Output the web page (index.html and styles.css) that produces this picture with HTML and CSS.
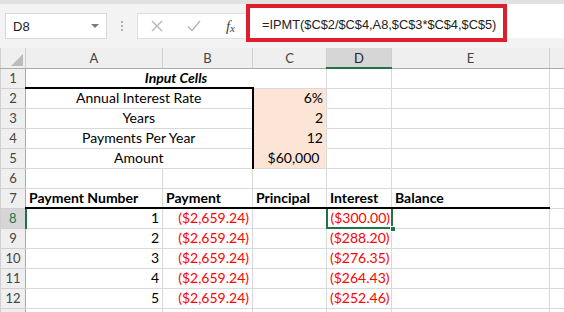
FILE: index.html
```html
<!DOCTYPE html>
<html lang="en">
<head>
  <meta charset="UTF-8">
  <title>IPMT example</title>
  <link rel="stylesheet" href="styles.css">
</head>
<body>

  <div class="ribbon-edge"></div>
  <div class="formula-row">
    <div class="name-box">
      <span>D8</span>
      <svg class="caret" width="8" height="4" viewBox="0 0 8 4"><path d="M0 0h8L4 4z" fill="#7a7a7a"/></svg>
    </div>
    <div class="grip"><i></i><i></i><i></i></div>
    <div class="fx-buttons">
      <svg width="12" height="12" viewBox="0 0 12 12"><path d="M1 1l10 10M11 1L1 11" stroke="#b4b4b4" stroke-width="1.3"/></svg>
      <svg width="14" height="12" viewBox="0 0 14 12"><path d="M1 6.5l4 4L13 1" stroke="#b4b4b4" stroke-width="1.3" fill="none"/></svg>
      <span class="fx">f<sub>x</sub></span>
    </div>
    <div class="formula">
      <span>=IPMT($C$2/$C$4,A8,$C$3*$C$4,$C$5)</span>
      <div class="callout"></div>
    </div>
  </div>

  <table class="sheet">
    <colgroup>
      <col style="width:25px">
      <col style="width:137px">
      <col style="width:90px">
      <col style="width:74px">
      <col style="width:65px">
      <col style="width:158px">
      <col style="width:60px">
    </colgroup>
    <thead>
      <tr>
        <th class="corner"><svg width="12" height="12" viewBox="0 0 12 12"><path d="M12 0V12H0z" fill="#bcbcbc"/></svg></th>
        <th>A</th><th>B</th><th>C</th><th class="active-col">D</th><th>E</th><th></th>
      </tr>
    </thead>
    <tbody>
      <tr>
        <th>1</th>
        <td colspan="3" class="title">Input Cells</td><td></td><td></td><td></td>
      </tr>
      <tr>
        <th>2</th>
        <td colspan="2" class="label first">Annual Interest Rate</td>
        <td class="input num">6%</td><td></td><td></td><td></td>
      </tr>
      <tr>
        <th>3</th>
        <td colspan="2" class="label">Years</td>
        <td class="input num">2</td><td></td><td></td><td></td>
      </tr>
      <tr>
        <th>4</th>
        <td colspan="2" class="label">Payments Per Year</td>
        <td class="input num">12</td><td></td><td></td><td></td>
      </tr>
      <tr>
        <th>5</th>
        <td colspan="2" class="label">Amount</td>
        <td class="input num last">$60,000&nbsp;</td><td></td><td></td><td></td>
      </tr>
      <tr>
        <th>6</th>
        <td></td><td></td><td></td><td></td><td></td><td></td>
      </tr>
      <tr class="head-row">
        <th>7</th>
        <td>Payment Number</td><td>Payment</td><td>Principal</td><td>Interest</td><td>Balance</td><td class="plain"></td>
      </tr>
      <tr>
        <th class="active-row">8</th>
        <td class="num">1</td><td class="num neg">($2,659.24)</td><td></td>
        <td class="num neg selected">($300.00)<span class="handle"></span></td><td></td><td></td>
      </tr>
      <tr>
        <th>9</th>
        <td class="num">2</td><td class="num neg">($2,659.24)</td><td></td><td class="num neg">($288.20)</td><td></td><td></td>
      </tr>
      <tr>
        <th>10</th>
        <td class="num">3</td><td class="num neg">($2,659.24)</td><td></td><td class="num neg">($276.35)</td><td></td><td></td>
      </tr>
      <tr>
        <th>11</th>
        <td class="num">4</td><td class="num neg">($2,659.24)</td><td></td><td class="num neg">($264.43)</td><td></td><td></td>
      </tr>
      <tr>
        <th>12</th>
        <td class="num">5</td><td class="num neg">($2,659.24)</td><td></td><td class="num neg">($252.46)</td><td></td><td></td>
      </tr>
      <tr>
        <th></th>
        <td></td><td></td><td></td><td></td><td></td><td></td>
      </tr>
    </tbody>
  </table>

</body>
</html>
```

FILE: styles.css
```css
* {
  box-sizing: border-box;
}

body {
  margin: 0;
  width: 564px;
  height: 312px;
  overflow: hidden;
  background: #fff;
  font-family: Lato, "Liberation Sans", Arial, sans-serif;
  color: #000;
}

.ribbon-edge {
  height: 4px;
  background: #e1e1e1;
}

.formula-row {
  display: flex;
  align-items: flex-start;
  height: 44px;
  background: #f3f3f3;
}

.name-box {
  display: flex;
  align-items: center;
  justify-content: space-between;
  width: 102px;
  height: 26px;
  margin: 9px 0 0 5px;
  padding: 0 7px 0 7px;
  background: #fff;
  border: 1px solid #d6d6d6;
  font-family: "Liberation Sans", Arial, sans-serif;
  font-size: 13px;
  color: #222;
}

.grip {
  display: flex;
  flex-direction: column;
  gap: 2px;
  margin: 17px 0 0 14px;
}

.grip i {
  display: block;
  width: 2px;
  height: 2px;
  background: #b0b0b0;
}

.fx-buttons {
  display: flex;
  align-items: center;
  justify-content: space-between;
  width: 109px;
  height: 26px;
  margin: 9px 0 0 14px;
  padding: 0 11px 0 13px;
  background: #fff;
  border: 1px solid #dedede;
  border-right: none;
}

.fx {
  font-family: "Liberation Serif", "Times New Roman", serif;
  font-style: italic;
  font-size: 15px;
  color: #444;
}

.fx sub {
  font-size: 11px;
  vertical-align: -1px;
}

.formula {
  position: relative;
  flex: 1;
  height: 34px;
  padding: 13px 0 0 16px;
  background: #fff;
  font-family: "Liberation Sans", Arial, sans-serif;
  font-size: 12.8px;
  color: #222;
  white-space: nowrap;
}

.callout {
  position: absolute;
  left: 0;
  top: 0;
  width: 261px;
  height: 38px;
  border: 4px solid #dc1f2b;
}

.sheet {
  border-collapse: collapse;
  table-layout: fixed;
  width: 609px;
  font-size: 14px;
}

.sheet th,
.sheet td {
  height: 20px;
  padding: 0 3px;
  border: 1px solid #d9d9d9;
  white-space: nowrap;
  overflow: hidden;
  line-height: 18px;
}

.sheet th {
  background: #efefef;
  font-weight: normal;
  color: #444;
  font-size: 13px;
  text-align: center;
  border-color: #d0d0d0;
}

.sheet thead th {
  border-top: none;
  border-bottom-color: #ababab;
  padding: 0;
}

.sheet tbody th {
  padding: 0;
  border-right-color: #ababab;
}

.sheet .corner {
  text-align: right;
  vertical-align: bottom;
  padding: 0 2px 2px 0;
  line-height: 0;
}

.sheet .active-col {
  background: #d6d6d6;
  color: #222;
  border-bottom: 2px solid #217346;
}

.sheet .active-row {
  background: #d6d6d6;
  color: #217346;
  border-right: 2px solid #217346;
}

.title {
  text-align: center;
  font-weight: bold;
  font-style: italic;
}

.label {
  text-align: center;
  border-right: 2px solid #000 !important;
}

.label.first {
  border-top: 2px solid #000;
}

.input {
  background: #fce4d6;
  border-top-color: #fce4d6 !important;
  border-bottom-color: #fce4d6 !important;
}

.input.last {
  border-bottom-color: #d9d9d9 !important;
}

.num {
  text-align: right;
}

.neg {
  color: #f00;
}

.head-row td {
  font-weight: bold;
  border-bottom: 2px solid #000;
}

.head-row td.plain {
  border-bottom: 1px solid #d9d9d9;
}

.selected {
  position: relative;
  overflow: visible !important;
  border: 2px solid #217346 !important;
}

.handle {
  position: absolute;
  right: -5px;
  bottom: -5px;
  width: 6px;
  height: 6px;
  background: #217346;
  border: 1px solid #fff;
}
```
